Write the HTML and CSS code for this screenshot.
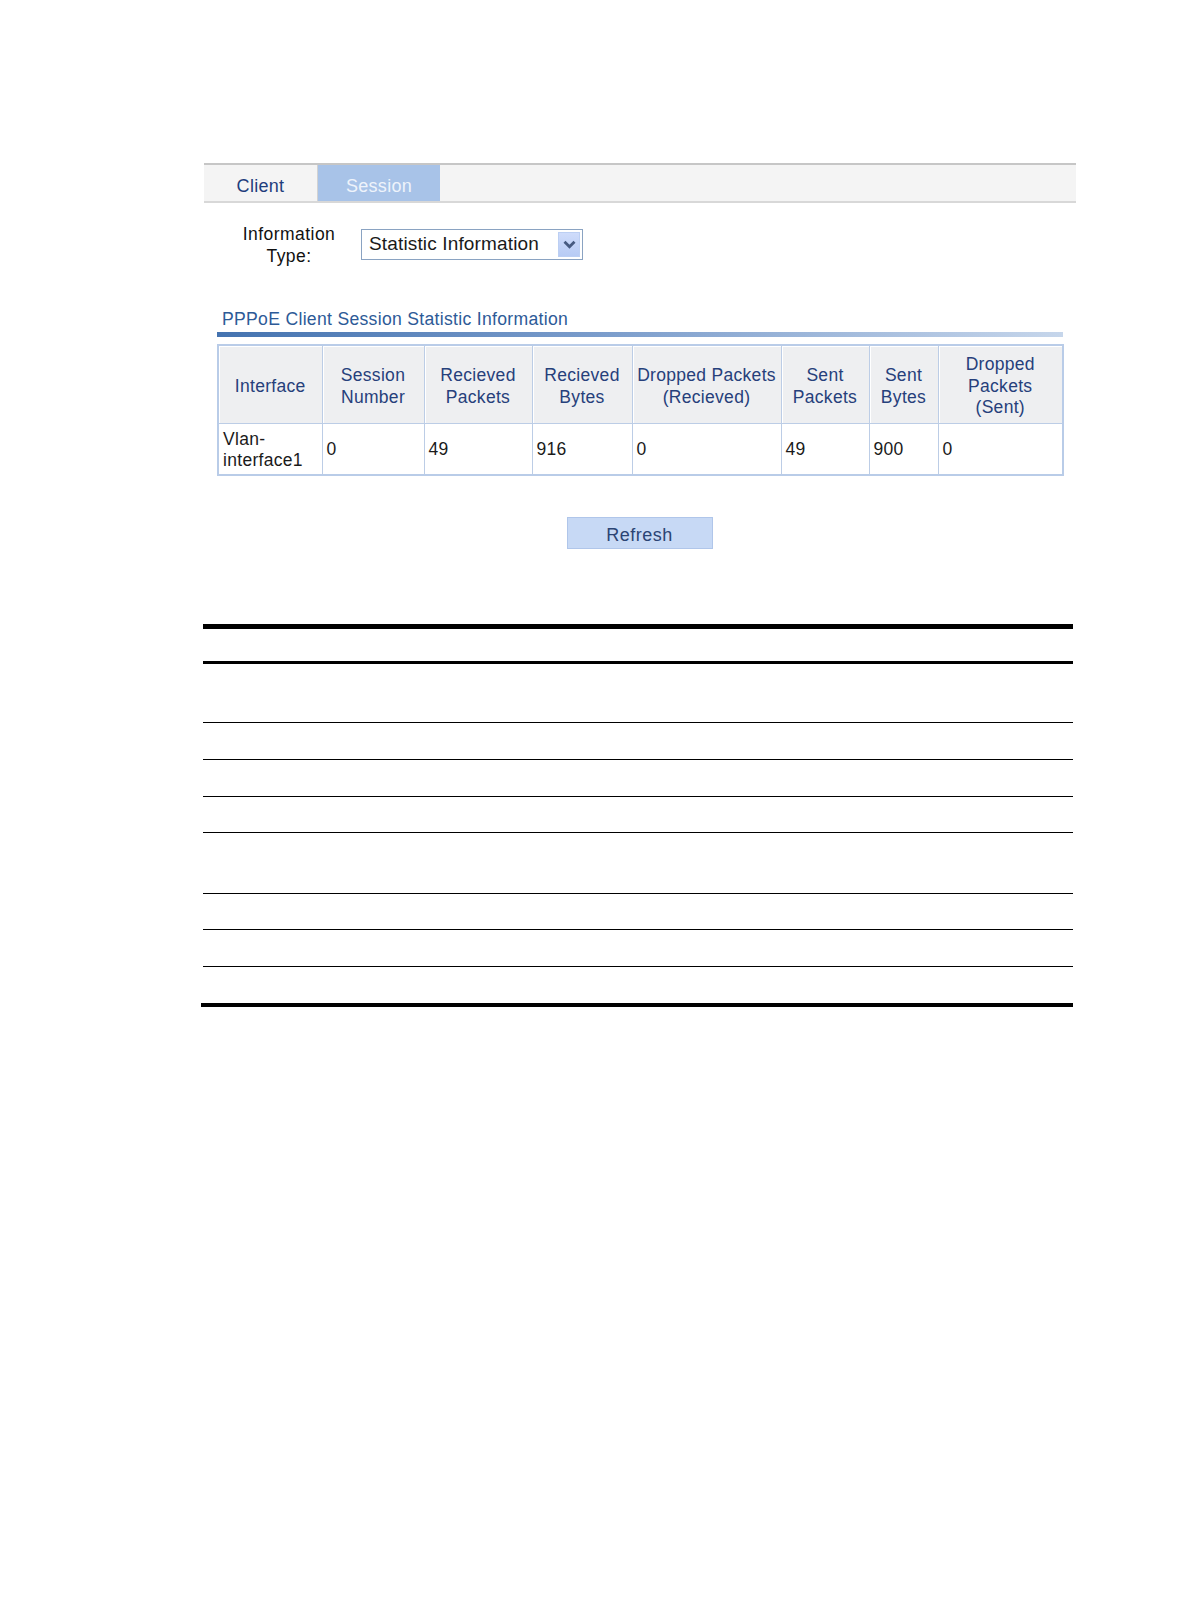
FILE: index.html
```html
<!DOCTYPE html>
<html>
<head>
<meta charset="utf-8">
<link rel="stylesheet" href="styles.css">
</head>
<body>
<div class="page">
  <div class="tabbar">
    <div class="tab tab-client">Client</div>
    <div class="tab tab-session">Session</div>
  </div>

  <div class="content">
    <div class="form-row">
      <div class="form-label">Information<br>Type:</div>
      <div class="select">
        <span class="select-text">Statistic Information</span>
        <span class="select-btn">
          <svg width="13" height="9" viewBox="0 0 13 9"><path d="M1.5 1.8 L6.5 6.8 L11.5 1.8" fill="none" stroke="#465a80" stroke-width="2.8"/></svg>
        </span>
      </div>
    </div>

    <div class="section-title">PPPoE Client Session Statistic Information</div>
    <div class="section-bar"></div>

    <table class="stats">
      <colgroup>
        <col style="width:104px"><col style="width:102px"><col style="width:108px"><col style="width:100px">
        <col style="width:149px"><col style="width:88px"><col style="width:69px"><col style="width:125px">
      </colgroup>
      <thead>
        <tr>
          <th>Interface</th>
          <th>Session<br>Number</th>
          <th>Recieved<br>Packets</th>
          <th>Recieved<br>Bytes</th>
          <th>Dropped Packets<br>(Recieved)</th>
          <th>Sent<br>Packets</th>
          <th>Sent<br>Bytes</th>
          <th>Dropped<br>Packets<br>(Sent)</th>
        </tr>
      </thead>
      <tbody>
        <tr>
          <td>Vlan-<br>interface1</td>
          <td>0</td>
          <td>49</td>
          <td>916</td>
          <td>0</td>
          <td>49</td>
          <td>900</td>
          <td>0</td>
        </tr>
      </tbody>
    </table>

    <div class="btn-row">
      <div class="btn">Refresh</div>
    </div>
  </div>

  <div class="doc-table">
    <div class="doc-rule-top"></div>
    <div class="doc-row h-head"></div>
    <div class="doc-row h-59 first"></div>
    <div class="doc-row h-36"></div>
    <div class="doc-row h-36"></div>
    <div class="doc-row h-35"></div>
    <div class="doc-row h-60"></div>
    <div class="doc-row h-35"></div>
    <div class="doc-row h-36"></div>
    <div class="doc-row h-36 last"></div>
  </div>
</div>
</body>
</html>
```

FILE: styles.css
```css
html, body {
  margin: 0;
  padding: 0;
  background: #ffffff;
}

body {
  font-family: "Liberation Sans", Arial, sans-serif;
  font-size: 17.5px;
  letter-spacing: 0.3px;
  color: #1a1a1a;
}

.page {
  padding-top: 163px;
  padding-left: 204px;
  width: 870px;
}

/* Tabs */
.tabbar {
  display: flex;
  height: 36px;
  margin-right: -2px;
  background: #f4f4f4;
  border-top: 2px solid #c6c6c6;
  border-bottom: 2px solid #d8d8d8;
}

.tab {
  display: flex;
  align-items: center;
  justify-content: center;
  padding-top: 6px;
  box-sizing: border-box;
  font-size: 18px;
}

.tab-client {
  width: 114px;
  color: #1f3d7c;
  border-right: 1px solid #d2d2d2;
}

.tab-session {
  width: 122px;
  background: #a8c3e8;
  color: #eef3fb;
}

/* Content */
.content {
  padding-left: 13px;
}

.form-row {
  display: flex;
  align-items: center;
  margin-top: 18px;
  margin-left: 13px;
}

.form-label {
  width: 118px;
  margin-right: 13px;
  text-align: center;
  line-height: 22px;
  font-size: 17.5px;
  letter-spacing: 0.45px;
  color: #111111;
  padding-top: 2px;
}

.select {
  display: flex;
  align-items: center;
  width: 222px;
  height: 31px;
  box-sizing: border-box;
  border: 1px solid #8aa3c2;
  background: #ffffff;
}

.select-text {
  flex: 1;
  padding-left: 7px;
  font-size: 19px;
  letter-spacing: 0.15px;
  color: #1a1a1a;
  white-space: nowrap;
}

.select-btn {
  display: flex;
  align-items: center;
  justify-content: center;
  width: 22px;
  height: 25px;
  margin-right: 2px;
  box-sizing: border-box;
  background: linear-gradient(#cfdcfb, #b7cbf4);
  border: 1px solid #bccff3;
}

.section-title {
  margin-top: 41px;
  padding-left: 5px;
  font-size: 17.6px;
  color: #2d5a97;
  line-height: 22px;
}

.section-bar {
  margin-top: 2px;
  height: 5px;
  width: 846px;
  background: linear-gradient(to right, #4473b0 0%, #7a9ccb 45%, #c6d6eb 100%);
}

/* Stats table */
.stats {
  margin-top: 7px;
  width: 845px;
  table-layout: fixed;
  border-collapse: collapse;
  border: 2px solid #b9cce8;
}

.stats th,
.stats td {
  border: 1px solid #bccde6;
  font-weight: normal;
}

.stats th {
  height: 73px;
  background: #eeeff1;
  color: #26407b;
  text-align: center;
  vertical-align: middle;
  line-height: 21.5px;
  padding: 4px 2px 0;
  font-size: 17.5px;
  box-shadow: inset 1px 1px 0 #ffffff;
}

.stats td {
  height: 49px;
  padding: 1px 4px 0;
  color: #1a1a1a;
  text-align: left;
  vertical-align: middle;
  line-height: 21px;
  font-size: 17.5px;
}

.btn-row {
  display: flex;
  justify-content: center;
  margin-top: 41px;
  width: 845px;
}

.btn {
  width: 146px;
  height: 32px;
  box-sizing: border-box;
  background: #c7d9f5;
  border: 1px solid #b0c6ea;
  color: #2b4474;
  font-size: 18px;
  letter-spacing: 0.5px;
  display: flex;
  align-items: center;
  justify-content: center;
  padding-top: 4px;
}

/* Document table (rules only) */
.doc-table {
  margin-top: 75px;
  margin-left: -1px;
  width: 870px;
}

.doc-rule-top {
  height: 5px;
  background: #000000;
}

.doc-row {
  border-bottom: 1px solid #000000;
}

.h-head {
  height: 32px;
  border-bottom: 3px solid #000000;
}

.h-59 { height: 58px; }
.h-36 { height: 36px; }
.h-35 { height: 35px; }
.h-60 { height: 60px; }

.doc-row.last {
  border-bottom: 4px solid #000000;
  margin-left: -2px;
  padding-left: 2px;
}
```
